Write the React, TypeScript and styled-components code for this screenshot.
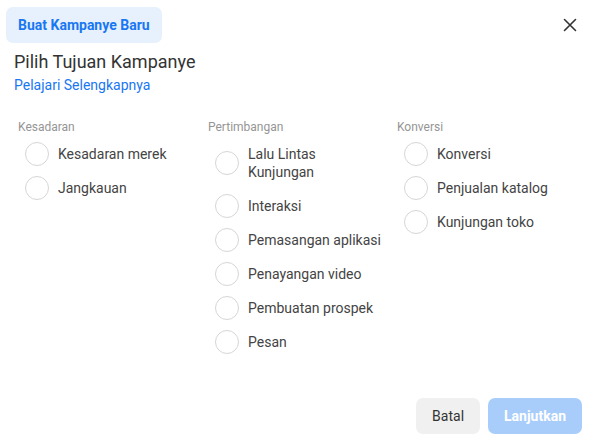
import React from 'react'
import styled, { createGlobalStyle } from 'styled-components'

const GlobalStyle = createGlobalStyle`
  html, body {
    margin: 0;
    padding: 0;
    background: #ffffff;
    font-family: Roboto, "Liberation Sans", Arial, sans-serif;
  }
`

const Dialog = styled.div`
  width: 594px;
  height: 442px;
  box-sizing: border-box;
  display: flex;
  flex-direction: column;
  padding: 7px 12px 8px 6px;
`

const Header = styled.div`
  display: flex;
  align-items: center;
  justify-content: space-between;
`

const TitlePill = styled.div`
  height: 36px;
  padding: 0 12px;
  display: flex;
  align-items: center;
  border-radius: 7px;
  background: #e7f0fd;
  color: #1877f2;
  font-size: 14px;
  font-weight: 700;
`

const CloseButton = styled.button`
  width: 24px;
  height: 24px;
  padding: 0;
  border: none;
  background: transparent;
  display: flex;
  align-items: center;
  justify-content: center;
  cursor: pointer;
`

const Intro = styled.div`
  padding: 8px 0 0 8px;
  display: flex;
  flex-direction: column;
`

const Heading = styled.div`
  font-size: 18px;
  line-height: 22px;
  color: #333333;
`

const LearnLink = styled.a`
  margin-top: 2px;
  font-size: 14px;
  line-height: 20px;
  color: #1877f2;
  text-decoration: none;
`

const Columns = styled.div`
  margin-top: 24px;
  padding-left: 12px;
  display: grid;
  grid-template-columns: 190px 189px 1fr;
`

const Group = styled.div`
  display: flex;
  flex-direction: column;
`

const GroupLabel = styled.div`
  font-size: 12px;
  line-height: 16px;
  color: #959595;
  margin-bottom: 2px;
`

const Options = styled.div`
  display: flex;
  flex-direction: column;
  padding-left: 7px;
`

const Option = styled.label`
  display: flex;
  align-items: center;
  gap: 9px;
  cursor: pointer;
`

const Circle = styled.span`
  flex: none;
  width: 24px;
  height: 24px;
  box-sizing: border-box;
  border-radius: 50%;
  border: 1px solid #d6d6d6;
  background: #ffffff;
`

const OptionText = styled.span`
  padding: 8px 0;
  font-size: 14px;
  line-height: 18px;
  color: #444444;
  max-width: 135px;
`

const Footer = styled.div`
  margin-top: auto;
  display: flex;
  justify-content: flex-end;
  gap: 8px;
`

const Button = styled.button<{ $primary?: boolean }>`
  height: 36px;
  padding: 0 16px;
  border: none;
  border-radius: 7px;
  font-family: inherit;
  font-size: 14px;
  font-weight: ${p => (p.$primary ? 700 : 400)};
  background: ${p => (p.$primary ? '#a8cdfb' : '#f0f0f0')};
  color: ${p => (p.$primary ? '#ffffff' : '#333333')};
`

const groups = [
  { label: 'Kesadaran', items: ['Kesadaran merek', 'Jangkauan'] },
  {
    label: 'Pertimbangan',
    items: ['Lalu Lintas Kunjungan', 'Interaksi', 'Pemasangan aplikasi', 'Penayangan video', 'Pembuatan prospek', 'Pesan'],
  },
  { label: 'Konversi', items: ['Konversi', 'Penjualan katalog', 'Kunjungan toko'] },
]

export default function App() {
  return (
    <>
      <GlobalStyle />
      <Dialog>
        <Header>
          <TitlePill>Buat Kampanye Baru</TitlePill>
          <CloseButton aria-label="Tutup">
            <svg width="14" height="14" viewBox="0 0 14 14">
              <path d="M1.5 1.5 L12.5 12.5 M12.5 1.5 L1.5 12.5" stroke="#333" strokeWidth="1.6" strokeLinecap="round" />
            </svg>
          </CloseButton>
        </Header>
        <Intro>
          <Heading>Pilih Tujuan Kampanye</Heading>
          <LearnLink href="#">Pelajari Selengkapnya</LearnLink>
        </Intro>
        <Columns>
          {groups.map(g => (
            <Group key={g.label}>
              <GroupLabel>{g.label}</GroupLabel>
              <Options>
                {g.items.map(item => (
                  <Option key={item}>
                    <Circle />
                    <OptionText>{item}</OptionText>
                  </Option>
                ))}
              </Options>
            </Group>
          ))}
        </Columns>
        <Footer>
          <Button>Batal</Button>
          <Button $primary>Lanjutkan</Button>
        </Footer>
      </Dialog>
    </>
  )
}
